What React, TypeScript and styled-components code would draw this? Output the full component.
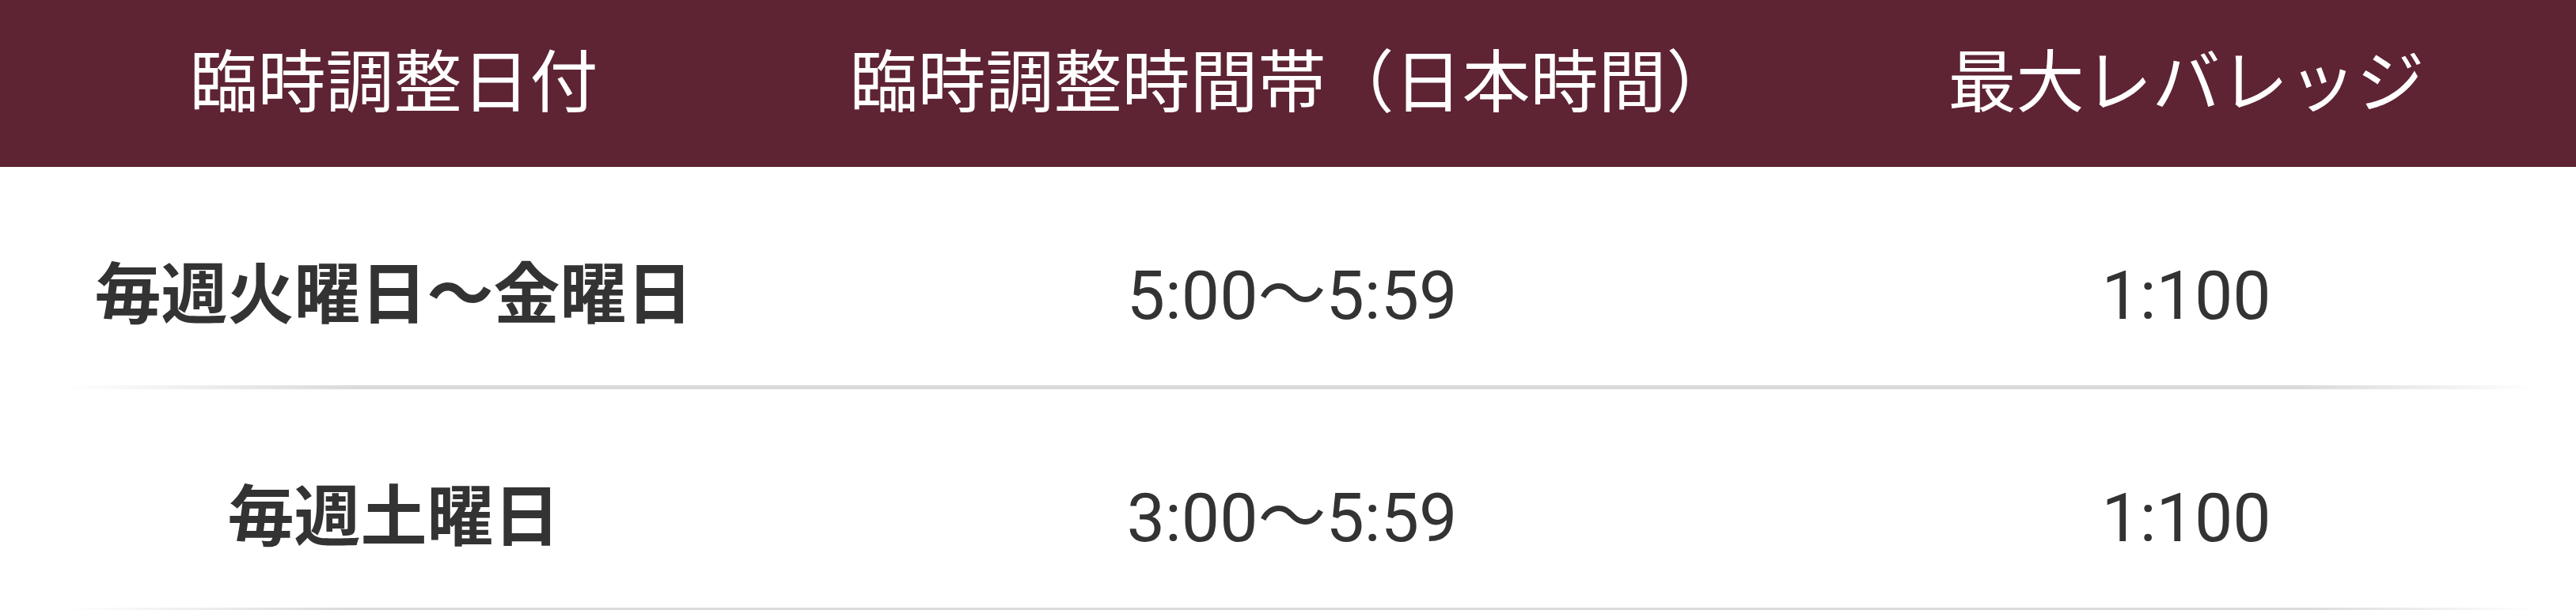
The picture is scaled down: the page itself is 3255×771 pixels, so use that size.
import React from 'react';
import styled, { createGlobalStyle } from 'styled-components';

const GlobalStyle = createGlobalStyle`
  html, body {
    margin: 0;
    padding: 0;
    background: #ffffff;
  }
  body {
    font-family: Roboto, "Noto Sans CJK JP", sans-serif;
  }
`;

const Table = styled.div`
  width: 100%;
`;

const Row = styled.div`
  display: grid;
  grid-template-columns: 995px 1275px 1fr;
  align-items: center;
`;

const HeaderRow = styled(Row)`
  height: 211px;
  background: #5e2434;
`;

const BodyRow = styled(Row)`
  padding: 120px 0 70px;
  border-bottom: 5px solid #dadada;
  border-image: linear-gradient(
      90deg,
      rgba(218, 218, 218, 0) 80px,
      #dadada 450px,
      #dadada calc(100% - 350px),
      rgba(218, 218, 218, 0) calc(100% - 50px)
    )
    1;
`;

const HeadCell = styled.div`
  text-align: center;
  color: #ffffff;
  font-size: 86px;
  font-weight: 400;
  line-height: 1;
  white-space: nowrap;
`;

const Cell = styled.div<{ $bold?: boolean }>`
  height: 86px;
  text-align: center;
  color: #333333;
  font-size: ${(p) => (p.$bold ? '84px' : '86px')};
  font-weight: ${(p) => (p.$bold ? 700 : 400)};
  line-height: 86px;
  white-space: nowrap;
`;

const rows = [
  { day: '毎週火曜日〜金曜日', time: '5:00〜5:59', leverage: '1:100' },
  { day: '毎週土曜日', time: '3:00〜5:59', leverage: '1:100' },
];

const App: React.FC = () => {
  return (
    <>
      <GlobalStyle />
      <Table>
        <HeaderRow>
          <HeadCell>臨時調整日付</HeadCell>
          <HeadCell>臨時調整時間帯（日本時間）</HeadCell>
          <HeadCell>最大レバレッジ</HeadCell>
        </HeaderRow>
        {rows.map((row) => (
          <BodyRow key={row.day}>
            <Cell $bold>{row.day}</Cell>
            <Cell>{row.time}</Cell>
            <Cell>{row.leverage}</Cell>
          </BodyRow>
        ))}
      </Table>
    </>
  );
};

export default App;
